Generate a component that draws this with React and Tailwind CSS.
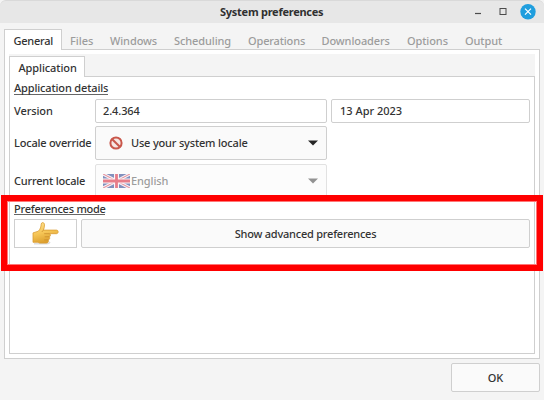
import React from "react";

const tabs = [
  { label: "Files", cls: "w-[40px] tracking-[-0.02px]" },
  { label: "Windows", cls: "w-[64px] tracking-[-0.1px]" },
  { label: "Scheduling", cls: "w-[74px] tracking-[-0.1px]" },
  { label: "Operations", cls: "w-[73.5px] tracking-[-0.15px]" },
  { label: "Downloaders", cls: "w-[85.5px] tracking-[-0.1px]" },
  { label: "Options", cls: "w-[58px] tracking-[-0.1px]" },
  { label: "Output", cls: "w-[54px] tracking-[-0.08px]" },
];

function TitleBar() {
  return (
    <header className="flex h-[23px] shrink-0 items-center rounded-t-[6px] border-t border-[#d9d9d9] bg-[#e7e7e7] pr-[8px]">
      <div className="w-[220px] shrink-0" />
      <h1 className="whitespace-nowrap text-[11px] font-bold leading-[22px] tracking-[-0.26px] text-[#303030]">System preferences</h1>
      <svg className="ml-auto" width="64" height="18" viewBox="0 0 64 18">
        <path d="M3 10.5h6" stroke="#4b4b4b" strokeWidth="1.2" />
        <rect x="28" y="5.5" width="6" height="6" fill="none" stroke="#4b4b4b" />
        <circle cx="56" cy="8.7" r="7.7" fill="#1f9ede" />
        <path d="M53 5.7l6 6M59 5.7l-6 6" stroke="#fff" strokeWidth="1.2" />
      </svg>
    </header>
  );
}

function Forbidden() {
  return (
    <svg width="14" height="14" viewBox="0 0 14 14">
      <circle cx="7" cy="7" r="5.6" fill="#f6e6e3" stroke="#c9574b" strokeWidth="2" />
      <path d="M3.2 3.2l7.6 7.6" stroke="#c9574b" strokeWidth="2" />
    </svg>
  );
}

function Flag() {
  return (
    <svg width="27" height="14" viewBox="0 0 27 14">
      <path fill="#8290bd" d="M0 0h27v14H0z" />
      <path d="M0 0l27 14M27 0L0 14" stroke="#f8f3f7" strokeWidth="3.2" />
      <path d="M0 0l27 14M27 0L0 14" stroke="#e5919c" strokeWidth="1.1" />
      <path d="M13.5 0v14M0 7h27" stroke="#fbf6f8" strokeWidth="5" />
      <path d="M13.5 0v14M0 7h27" stroke="#e77d89" strokeWidth="2.8" />
    </svg>
  );
}

function Hand() {
  return (
    <svg width="28" height="25" viewBox="0 0 28 25">
      <defs>
        <linearGradient id="skin" x1="0" y1="0" x2="0.3" y2="1">
          <stop offset="0" stopColor="#ffe391" />
          <stop offset="0.55" stopColor="#f6c657" />
          <stop offset="1" stopColor="#dda02e" />
        </linearGradient>
      </defs>
      <path d="M2 22.8h13q2 0 3-2" fill="none" stroke="#ddd" strokeWidth="1.5" />
      <path
        d="M1 11.9L6.3 10.2C8.4 8.2 9 5.8 9.2 3.1C9.5.9 12.4 1.1 12.5 3.8C12.5 6 12 7.6 11.4 9.1H24.5C26.7 9.1 26.7 12.6 24.5 12.7H17.4C18.9 13.1 18.8 15.5 17.2 15.8C18.2 16.8 17.7 18.7 16.2 18.9C16.8 20.4 15.9 22.1 14.4 22.1H7.6L6 21.3H1Z"
        fill="url(#skin)"
        stroke="#d99c32"
        strokeWidth="0.8"
      />
      <path d="M12.2 12.7h5.2M12.7 15.8h4.5M12.2 18.9h4M11.4 9.1L9.8 11" fill="none" stroke="#c78828" strokeWidth="0.7" />
    </svg>
  );
}

function Arrow({ color }) {
  return (
    <svg className="ml-auto" width="10" height="6" viewBox="0 0 10 6">
      <path d="M0 .5h10L5 5.5z" fill={color} />
    </svg>
  );
}

export default function App() {
  return (
    <div className="relative flex h-[400px] w-[544px] flex-col overflow-hidden bg-[#f4f4f4] font-['Noto_Sans',sans-serif] text-[11px] font-medium leading-[14px] tracking-[-0.1px] text-[#333]">
      <TitleBar />
      <nav className="relative z-10 mx-[4px] mt-[6px] flex h-[21px] shrink-0 whitespace-nowrap">
        <div className="h-[21px] w-[58px] border border-b-0 border-[#cfcfcf] bg-white pl-[8.5px] pt-[4px] tracking-[-0.25px]">General</div>
        <div className="flex h-[21px] flex-1 border-b border-transparent pl-[8px] pt-[5px] text-[#9c9c9c]">
          {tabs.map((t) => (
            <span key={t.label} className={t.cls}>{t.label}</span>
          ))}
        </div>
      </nav>
      <main className="mx-[4px] -mt-px flex h-[310px] shrink-0 flex-col border border-[#cfcfcf] bg-white px-[4px] pb-[4px] pt-[4px]">
        <div className="relative z-10 -mb-px h-[23px] shrink-0 pt-[2px]">
          <div className="h-[21px] w-[76px] border border-b-0 border-[#cfcfcf] bg-white pl-[8.5px] pt-[4px]">Application</div>
        </div>
        <section className="flex flex-1 flex-col border border-[#cfcfcf] bg-white px-[4px] pt-[4px] shadow-[0_-22px_0_#f4f4f4]">
          <h2 className="h-[14px] w-[94px] whitespace-nowrap border-b border-[#666] leading-[14px] tracking-[-0.15px]">Application details</h2>
          <div className="mt-[4px] flex h-[24px] items-center">
            <span className="w-[81px] whitespace-nowrap">Version</span>
            <div className="h-[24px] w-[232px] rounded-[2px] border border-[#cfcfcf] pl-[7px] leading-[22px]">2.4.364</div>
            <div className="ml-[4px] h-[24px] w-[199px] rounded-[2px] border border-[#cfcfcf] pl-[8px] leading-[22px] tracking-[0px]">13 Apr 2023</div>
          </div>
          <div className="mt-[3px] flex h-[34px] items-center">
            <span className="w-[81px] whitespace-nowrap tracking-[-0.2px]">Locale override</span>
            <div className="flex h-[34px] w-[232px] items-center rounded-[2px] border border-[#cfcfcf] bg-[#fafafa] pl-[13px] pr-[8px]">
              <Forbidden />
              <span className="ml-[8px] whitespace-nowrap tracking-[-0.18px]">Use your system locale</span>
              <Arrow color="#252525" />
            </div>
          </div>
          <div className="mt-[4px] flex h-[34px] items-center">
            <span className="w-[81px] whitespace-nowrap tracking-[-0.2px]">Current locale</span>
            <div className="flex h-[34px] w-[232px] items-center rounded-[2px] border border-[#e2e2e2] bg-[#fcfcfc] pl-[7px] pr-[8px]">
              <Flag />
              <span className="ml-[1px] text-[#9d9d9d]">English</span>
              <Arrow color="#929292" />
            </div>
          </div>
          <h2 className="mt-[4px] h-[13px] w-[91px] whitespace-nowrap border-b border-[#666] tracking-[-0.24px]">Preferences mode</h2>
          <div className="mt-[4px] flex h-[29px]">
            <div className="flex w-[63px] items-center justify-center border border-[#cfcfcf] bg-white"><Hand /></div>
            <button className="ml-[4px] h-[29px] w-[449px] rounded-[2px] border border-[#cfcfcf] bg-[#fafafa] tracking-[-0.22px]">Show advanced preferences</button>
          </div>
        </section>
      </main>
      <button className="ml-[451px] mt-[4px] h-[29px] w-[89px] shrink-0 rounded-[2px] border border-[#cfcfcf] bg-[#fafafa]">OK</button>
      <div className="pointer-events-none absolute left-[1px] top-[195px] z-20 h-[76px] w-[542px] border-[6px] border-[#ff0000] outline-1 -outline-offset-[7px] outline-[#ff7777]" />
    </div>
  );
}
